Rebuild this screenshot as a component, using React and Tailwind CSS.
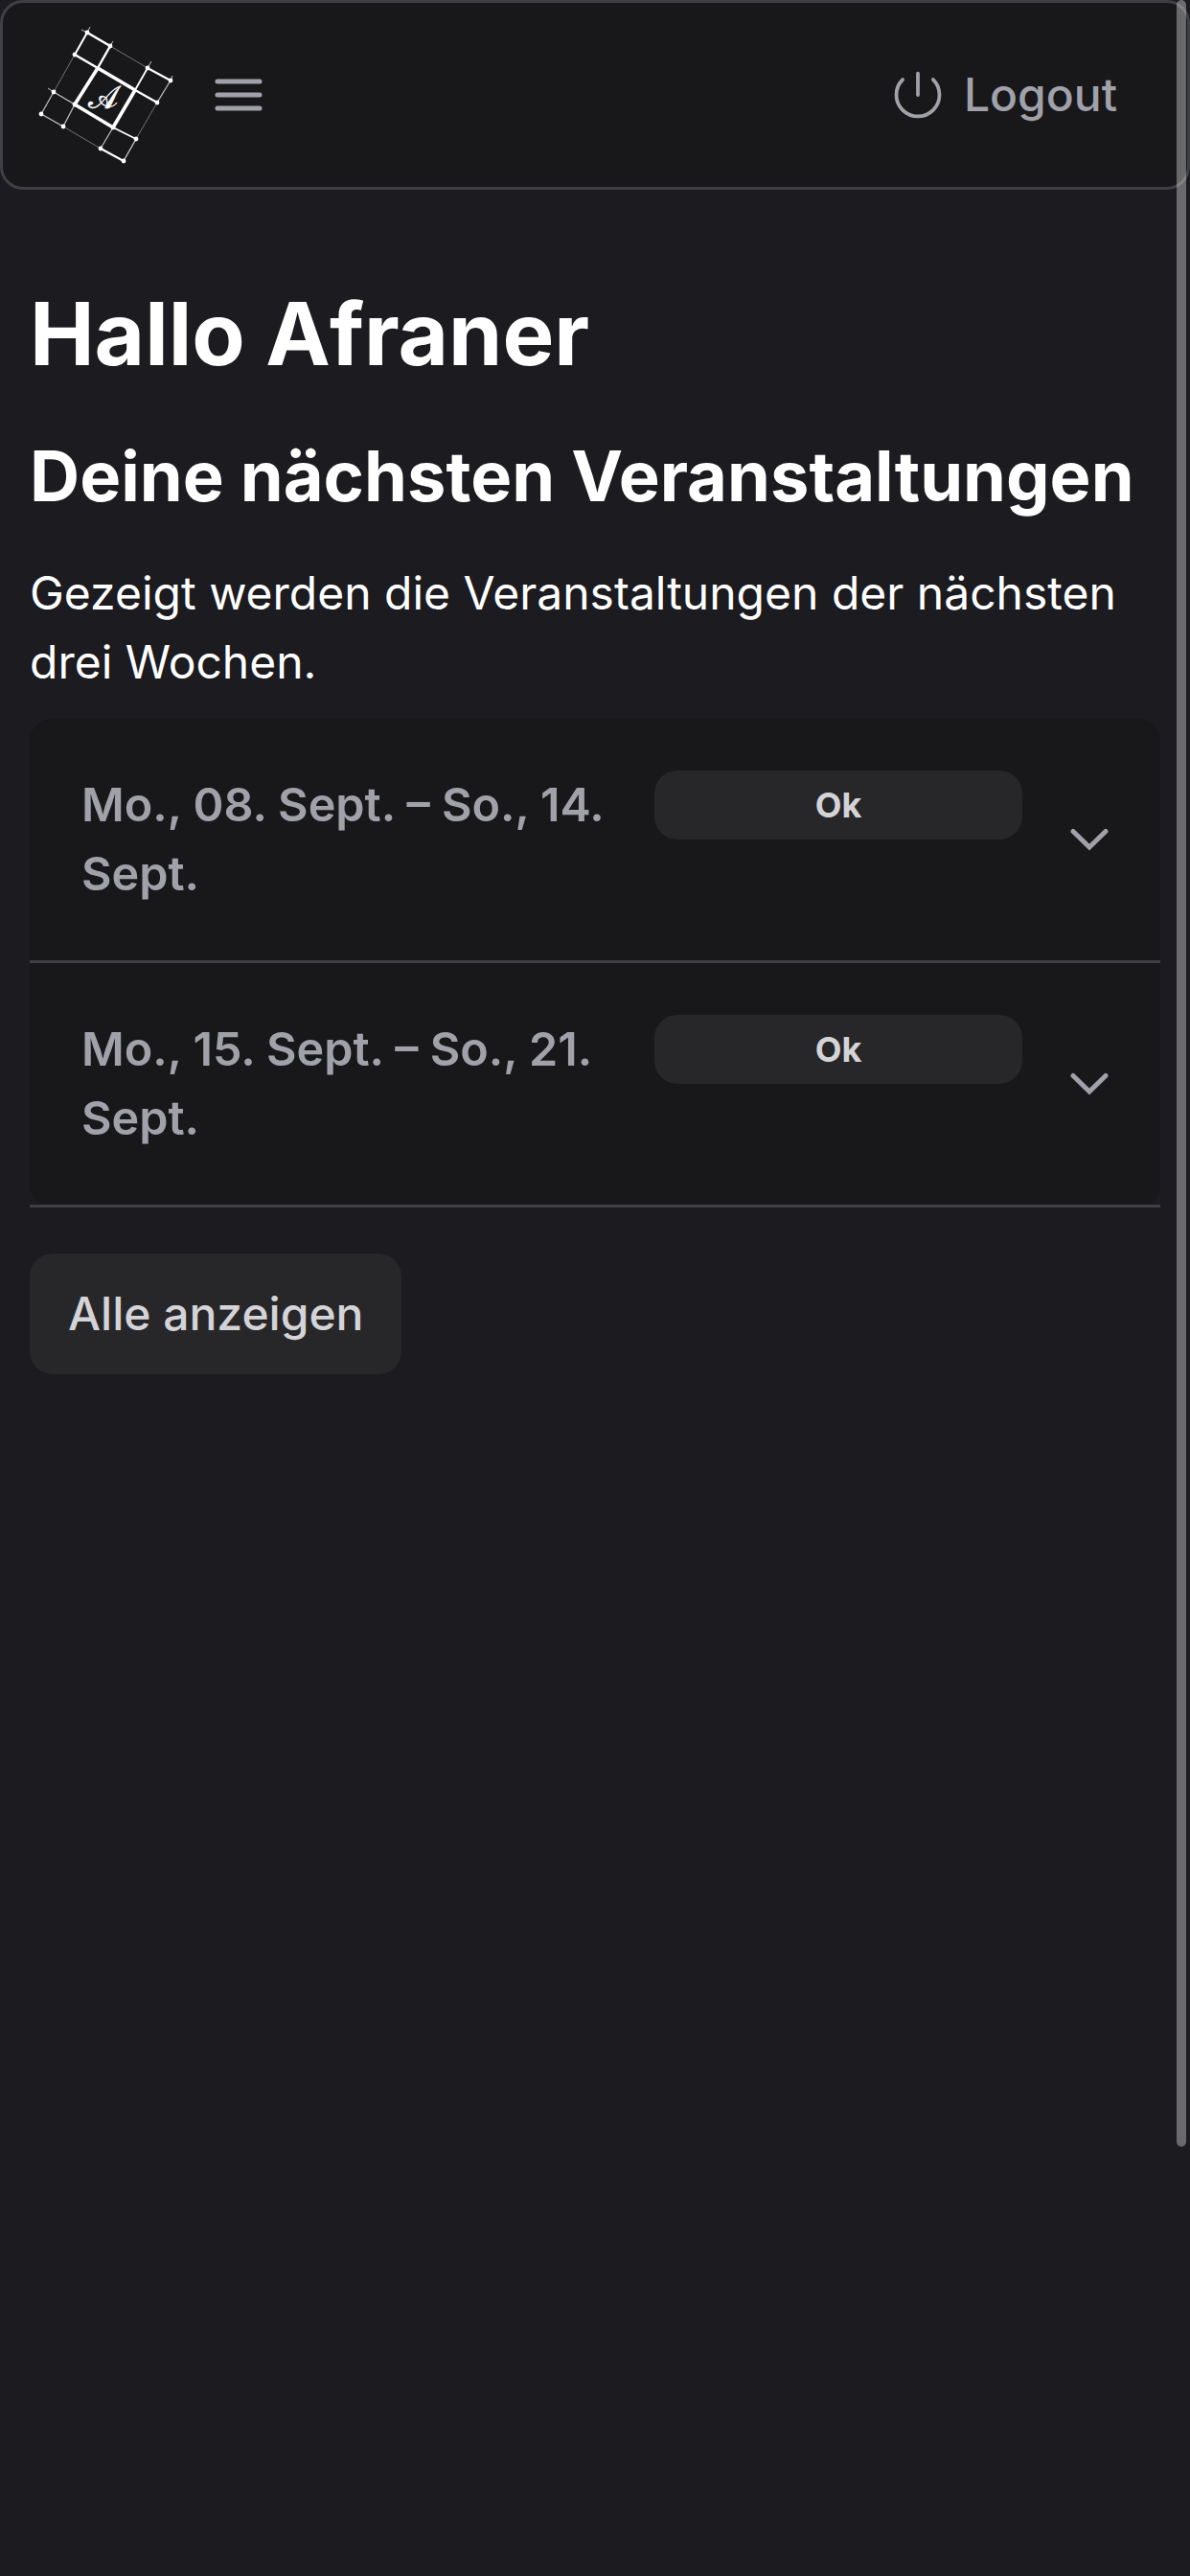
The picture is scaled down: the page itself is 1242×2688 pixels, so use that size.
import { HiOutlineBars3, HiOutlinePower } from "react-icons/hi2";

const weeks = [
  { id: 1, label: "Mo., 08. Sept. – So., 14. Sept.", status: "Ok" },
  { id: 2, label: "Mo., 15. Sept. – So., 21. Sept.", status: "Ok" },
];

const logoLines = [
  // horizontal
  [91, 34, 115, 48, 2.6], [115, 48, 154, 71, 0.8], [154, 71, 178, 84, 2],
  [78, 57, 102, 71, 2.6], [102, 71, 141, 94, 3.6], [141, 94, 164, 107, 2.2],
  [56, 96, 78, 109, 1.4], [78, 109, 118, 133, 3.6], [118, 133, 142, 145, 1.6],
  [43, 119, 66, 132, 1.4], [66, 132, 105, 155, 0.8], [105, 155, 129, 168, 2],
  // vertical
  [91, 34, 78, 57, 2], [78, 57, 56, 96, 0.8], [56, 96, 43, 119, 1.2],
  [115, 48, 102, 71, 2.4], [102, 71, 78, 109, 3.6], [78, 109, 66, 132, 1.2],
  [154, 71, 141, 94, 1.8], [141, 94, 118, 133, 3.6], [118, 133, 105, 155, 1.2],
  [178, 84, 164, 107, 1.2], [164, 107, 142, 145, 0.8], [142, 145, 129, 168, 1.4],
  // ticks
  [85, 31, 91, 34, 1], [91, 34, 94, 28, 1], [115, 48, 118, 43, 1], [154, 71, 158, 64, 1],
  [178, 84, 180, 79, 1], [50, 92, 56, 96, 1],
];

const logoDots = [
  [91, 34], [115, 48], [154, 71], [178, 84], [78, 57], [164, 107],
  [56, 96], [142, 145], [43, 119], [66, 132], [105, 155], [129, 168], [78, 109], [118, 133],
];

const Logo = () => (
  <svg viewBox="36 24 150 150" className="h-[150px] w-[150px] shrink-0">
    {logoLines.map(([x1, y1, x2, y2, w], i) => (
      <line key={i} x1={x1} y1={y1} x2={x2} y2={y2} stroke={w < 1 ? "#8a8a8a" : w < 1.5 ? "#c4c4c4" : "#ffffff"} strokeWidth={w} />
    ))}
    {logoDots.map(([cx, cy], i) => (
      <circle key={i} cx={cx} cy={cy} r="2.4" fill="#ffffff" />
    ))}
    <text x="107" y="113" textAnchor="middle" fill="#ffffff" stroke="#ffffff" strokeWidth="0.5" fontSize="33" fontFamily="'DejaVu Serif', 'Liberation Serif', serif">𝒜</text>
  </svg>
);

const Chevron = () => (
  <svg viewBox="0 0 44 24" fill="none" className="h-[24px] w-[44px] shrink-0">
    <path d="M5 3.5 22 20 39 3.5" stroke="#a1a1aa" strokeWidth="5" strokeLinecap="round" strokeLinejoin="miter" />
  </svg>
);

const WeekRow = ({ label, status }) => (
  <div className="flex items-center gap-[48px] border-b-[3px] border-[#3f3f46] py-[54px] pr-[52px] pl-[54px]">
    <div className="flex flex-1 items-start gap-[32px]">
      <p className="flex-1 text-[48.5px] leading-[72px] font-semibold text-[#a1a1aa]">{label}</p>
      <span className="flex h-[72px] w-[384px] shrink-0 items-center justify-center rounded-[24px] bg-[#27272a] text-[36px] font-bold text-[#d4d4d8]">
        {status}
      </span>
    </div>
    <Chevron />
  </div>
);

export default function App() {
  return (
    <div className="relative h-[2688px] overflow-hidden bg-[#1b1b20] font-['Inter',sans-serif] text-white">
      <header className="flex h-[198px] items-center justify-between rounded-[24px] border-[3px] border-[#3f3f46] bg-[#18181b] pr-[73px] pl-[33px]">
        <div className="flex items-center gap-[31px]">
          <Logo />
          <HiOutlineBars3 strokeWidth={1.9} className="h-[64px] w-[64px] text-[#a1a1aa]" />
        </div>
        <button type="button" className="flex items-center gap-[18px] text-[48px] leading-[72px] font-medium text-[#a1a1aa]">
          <HiOutlinePower className="h-[60px] w-[60px]" />
          Logout
        </button>
      </header>

      <main className="px-[31px] pt-[96px]">
        <h1 className="text-[90.5px] leading-[108px] font-bold">Hallo Afraner</h1>
        <h2 className="mt-[47px] text-[72.2px] leading-[96px] font-bold">Deine nächsten Veranstaltungen</h2>
        <p className="mt-[38px] text-[48px] leading-[72px]">
          Gezeigt werden die Veranstaltungen der nächsten drei Wochen.
        </p>

        <div className="mt-[23px] rounded-[24px] bg-[#18181b]">
          {weeks.map((w) => (
            <WeekRow key={w.id} label={w.label} status={w.status} />
          ))}
        </div>

        <button type="button" className="mt-[48px] h-[126px] rounded-[24px] bg-[#27272a] px-[40px] text-[48px] font-medium text-[#d4d4d8]">
          Alle anzeigen
        </button>
      </main>

      <div className="absolute top-0 right-[4px] h-[2240px] w-[10px] rounded-full bg-white/35" />
    </div>
  );
}
